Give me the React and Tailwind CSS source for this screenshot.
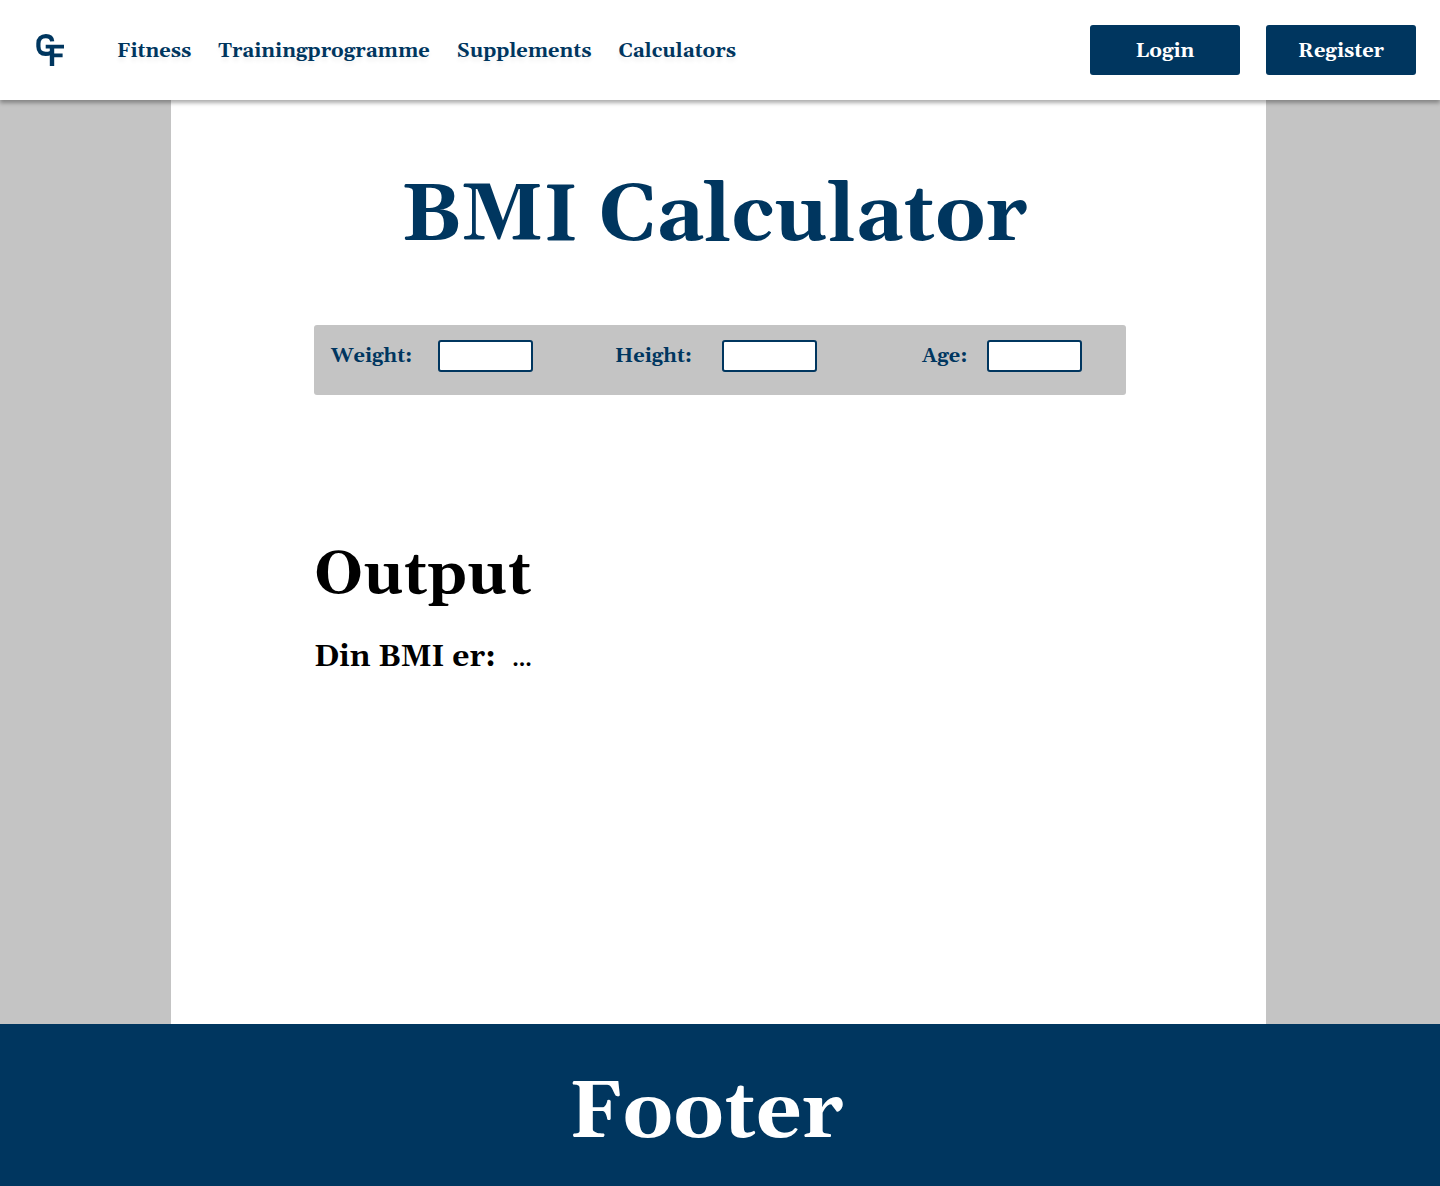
const links = ["Fitness", "Trainingprogramme", "Supplements", "Calculators"];

function Logo() {
  return (
    <svg viewBox="0 0 30 34" className="h-[34px] w-[30px]" fill="none" stroke="#00365f" aria-hidden="true">
      <path strokeWidth="4.2" d="M17.2 8.4C16.9 5 14.6 3.1 10.9 3.1C6.3 3.1 3.4 6 3.4 10.4V13.6C3.4 18.1 6.1 20.9 10.6 20.9C12.6 20.9 14.2 20.6 16 19.8" />
      <path strokeWidth="3.6" d="M10.7 13.6H29M17 22.4H27.6" />
      <path strokeWidth="4.4" d="M17 12V33" />
    </svg>
  );
}

function Field({ id, label, className = "", labelClass }) {
  return (
    <div className={`flex items-center ${className}`}>
      <label htmlFor={id} className={labelClass}>{label}</label>
      <input
        id={id}
        type="text"
        inputMode="decimal"
        className="h-8 w-[95px] rounded-[3px] border-2 border-[#00365f] bg-white px-2 outline-none"
      />
    </div>
  );
}

export default function App() {
  return (
    <div className="flex min-h-screen flex-col bg-[#c4c4c4] font-[Gelasio,Georgia,'Liberation_Serif',serif] font-bold text-[#00365f]">
      <header className="relative flex h-[100px] items-center bg-white pr-6 pl-[35px] shadow-[0_3px_4px_rgba(0,0,0,0.32)]">
        <a href="#" aria-label="Home"><Logo /></a>
        <nav className="ml-[52px] flex gap-[27px] pt-0.5 text-xl [text-shadow:0_4px_4px_rgba(0,0,0,0.06)]">
          {links.map((l) => <a key={l} href="#">{l}</a>)}
        </nav>
        <div className="ml-auto flex gap-[26px] text-xl text-white">
          <button type="button" className="h-[50px] w-[150px] rounded-[3px] bg-[#00365f] pt-0.5">Login</button>
          <button type="button" className="h-[50px] w-[150px] rounded-[3px] bg-[#00365f] pt-0.5">Register</button>
        </div>
      </header>
      <main className="mr-[174px] ml-[171px] flex-1 bg-white pr-[140px] pl-[143px]">
        <h1 className="mt-[69px] pr-3 text-center text-[80px] leading-[96px]">BMI Calculator</h1>
        <form className="mt-[60px] flex h-[70px] items-start rounded-[3px] bg-[#c4c4c4] pt-[15px] pl-[17px] text-xl">
          <Field id="weight" label="Weight:" labelClass="w-[107px]" />
          <Field id="height" label="Height:" className="ml-[82px]" labelClass="w-[107px]" />
          <Field id="age" label="Age:" className="ml-[105px]" labelClass="w-[65px]" />
        </form>
        <h2 className="mt-[136px] text-[60px] leading-[90px] text-black">Output</h2>
        <p className="mt-[18px] text-3xl text-black">
          Din BMI er:<output htmlFor="weight height age" className="ml-4 text-xl">...</output>
        </p>
      </main>
      <footer className="h-[162px] bg-[#00365f] pt-[30px] pr-7 text-center text-[80px] leading-[120px] text-white">Footer</footer>
    </div>
  );
}
